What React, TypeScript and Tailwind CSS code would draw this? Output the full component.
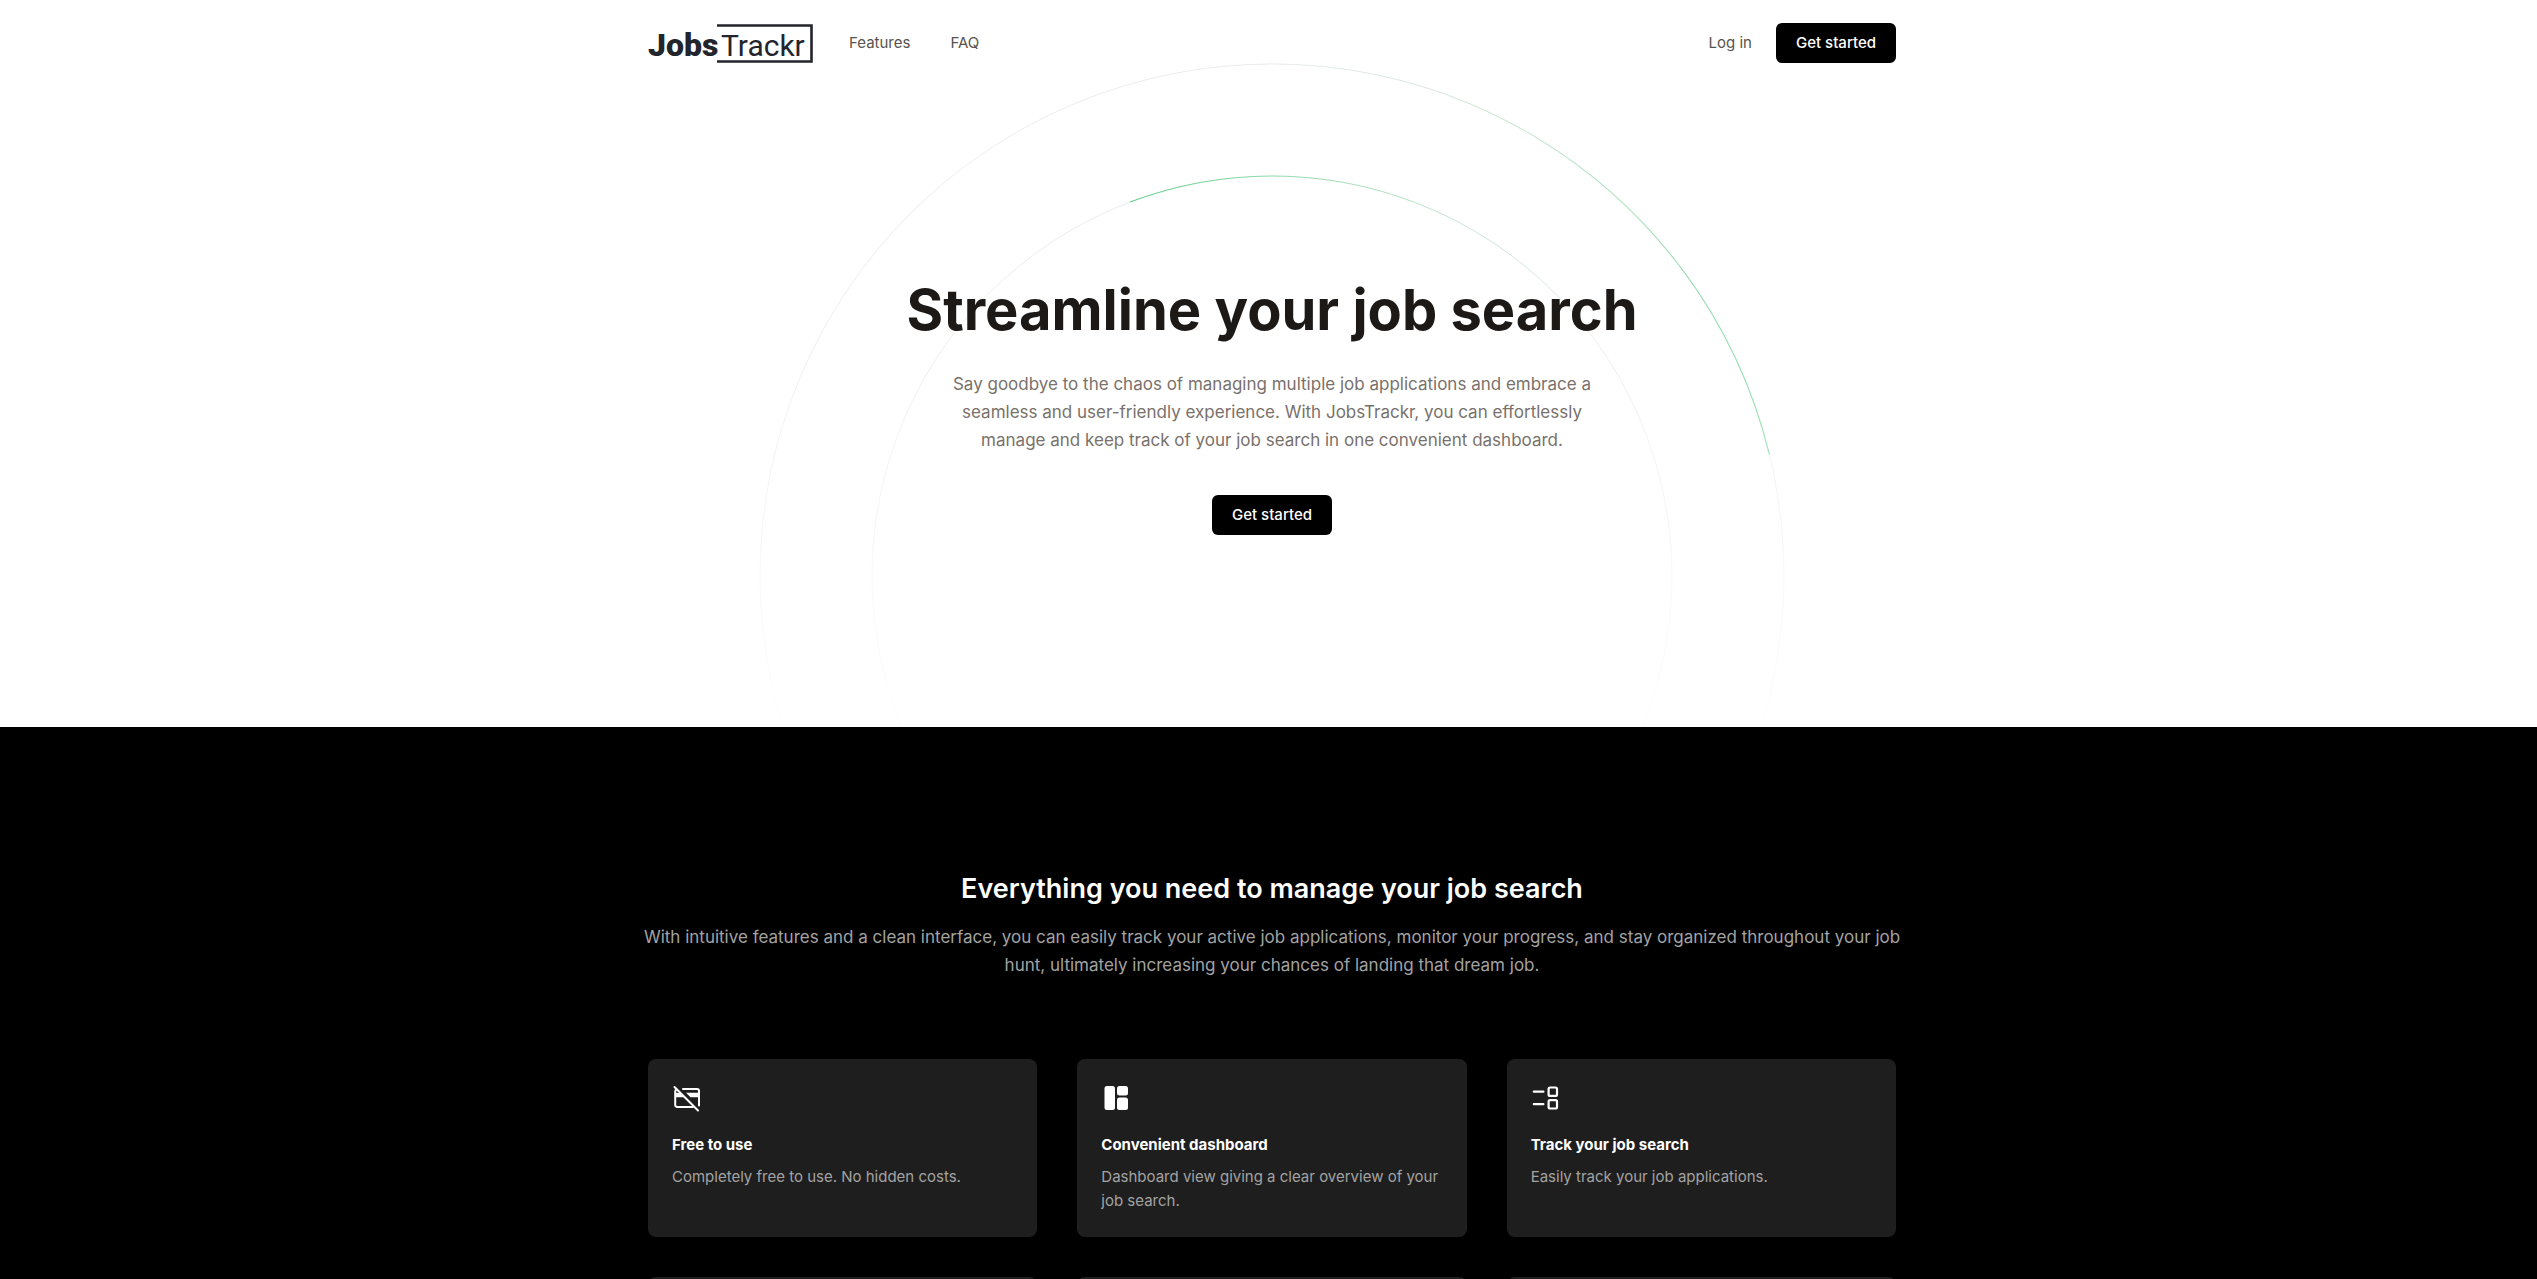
import type { ReactNode } from 'react';

function Logo() {
  return (
    <svg width="166" height="41" viewBox="0 0 166 41" role="img" aria-label="JobsTrackr" fill="#23252d">
      <text x="0" y="33" fontFamily="Roboto, sans-serif" fontWeight="900" fontSize="32">
        Jobs
      </text>
      <text x="73" y="33" fontFamily="Roboto, sans-serif" fontWeight="400" fontSize="30">
        Trackr
      </text>
      <path d="M69 2.500H163.500V38.500H69" fill="none" stroke="#23252d" strokeWidth="2.600" />
    </svg>
  );
}

function Rings() {
  return (
    <div
      aria-hidden="true"
      className="pointer-events-none absolute left-1/2 top-[63px] size-[1026px] -translate-x-1/2 [mask-image:linear-gradient(to_bottom,white_20%,transparent_70%)]"
    >
      <svg viewBox="0 0 1026 1026" fill="none" className="absolute inset-0 size-full">
        <defs>
          <linearGradient id="outer-glow" x1="1" y1="513" x2="1" y2="1025" gradientUnits="userSpaceOnUse">
            <stop stopColor="#22c55e" />
            <stop offset="1" stopColor="#22c55e" stopOpacity="0" />
          </linearGradient>
          <linearGradient id="inner-glow" x1="913" y1="513" x2="913" y2="913" gradientUnits="userSpaceOnUse">
            <stop stopColor="#22c55e" />
            <stop offset="1" stopColor="#22c55e" stopOpacity="0" />
          </linearGradient>
        </defs>
        <g strokeOpacity="0.7">
          <circle cx="513" cy="513" r="512" stroke="#d4d4d4" strokeOpacity="0.45" />
          <circle cx="513" cy="513" r="400" stroke="#d4d4d4" strokeOpacity="0.45" />
          <path d="M513 1025C230.23 1025 1 795.77 1 513" stroke="url(#outer-glow)" transform="rotate(166.3 513 513)" />
          <path d="M913 513c0 220.914-179.086 400-400 400" stroke="url(#inner-glow)" transform="rotate(-110.8 513 513)" />
        </g>
      </svg>
    </div>
  );
}

const CardOffIcon = (
  <svg width="30" height="30" viewBox="0 0 30 30" fill="none" stroke="white" strokeWidth="2" strokeLinecap="round" strokeLinejoin="round">
    <path d="M11 6h14a2 2 0 0 1 2 2v14.500M4.500 6.500a2 2 0 0 0-1.300 2V22a2 2 0 0 0 2 2H21" />
    <path d="M14 9.800h13v4.500h-8.500zM3.500 9.800h4.500l4.500 4.500h-9z" fill="white" stroke="none" />
    <path d="M2.500 4 26 27.500" />
  </svg>
);

const DashboardIcon = (
  <svg width="30" height="30" viewBox="0 0 30 30" fill="white">
    <rect x="3.500" y="3" width="10.500" height="24" rx="2.500" />
    <rect x="16" y="3" width="11" height="9.500" rx="2.500" />
    <rect x="16" y="14.500" width="11" height="12.500" rx="2.500" />
  </svg>
);

const TrackIcon = (
  <svg width="30" height="30" viewBox="0 0 30 30" fill="none" stroke="white" strokeWidth="2.200" strokeLinecap="round">
    <path d="M2.800 8.700h9.600M2.800 21.200h9.600" />
    <rect x="17.600" y="4.500" width="8.400" height="8.400" rx="1.500" />
    <rect x="17.600" y="17.100" width="8.400" height="8.400" rx="1.500" />
  </svg>
);

const features: { icon: ReactNode; title: string; text: string }[] = [
  { icon: CardOffIcon, title: 'Free to use', text: 'Completely free to use. No hidden costs.' },
  { icon: DashboardIcon, title: 'Convenient dashboard', text: 'Dashboard view giving a clear overview of your job search.' },
  { icon: TrackIcon, title: 'Track your job search', text: 'Easily track your job applications.' },
];

function GetStarted() {
  return (
    <button type="button" className="h-10 rounded-md bg-black px-5 text-[15px] font-medium text-white">
      Get started
    </button>
  );
}

export default function App() {
  return (
    <div className="h-screen overflow-x-hidden overflow-y-auto bg-white font-['Inter',sans-serif] text-[15px] [scrollbar-width:none]">
      <div className="relative pb-48 pl-[7px]">
        <div className="absolute inset-0 left-[7px] overflow-hidden">
          <Rings />
        </div>
        <header className="relative mx-auto flex h-[86px] max-w-[1248px] items-center justify-between">
          <div className="flex items-center">
            <a href="#home">
              <Logo />
            </a>
            <nav className="ml-[35px] flex gap-10 text-stone-600">
              <a href="#features">Features</a>
              <a href="#faq">FAQ</a>
            </nav>
          </div>
          <div className="flex items-center gap-6">
            <a href="#login" className="text-stone-600">
              Log in
            </a>
            <GetStarted />
          </div>
        </header>
        <main className="relative mx-auto flex max-w-3xl flex-col items-center pt-48 text-center">
          <h1 className="text-[56px] leading-[64px] font-bold text-stone-900">Streamline your job search</h1>
          <p className="mt-7 max-w-[672px] text-[17px] leading-7 text-stone-500">
            Say goodbye to the chaos of managing multiple job applications and embrace a seamless and user-friendly
            experience. With JobsTrackr, you can effortlessly manage and keep track of your job search in one convenient
            dashboard.
          </p>
          <div className="mt-[41px]">
            <GetStarted />
          </div>
        </main>
      </div>
      <section id="features" className="bg-black pt-36 pb-36 pl-[7px]">
        <div className="mx-auto max-w-[1248px]">
          <div className="-mx-2 text-center">
            <h2 className="text-[27px] leading-9 font-semibold text-white">Everything you need to manage your job search</h2>
            <p className="mt-4 text-[17px] leading-7 text-[#a3a3a3]">
              With intuitive features and a clean interface, you can easily track your active job applications, monitor
              your progress, and stay organized throughout your job hunt, ultimately increasing your chances of landing
              that dream job.
            </p>
          </div>
          <div className="mt-20 grid grid-cols-3 gap-10">
            {features.map((f) => (
              <article key={f.title} className="rounded-lg bg-[#1e1e1e] p-6">
                {f.icon}
                <h3 className="mt-5 leading-6 font-bold text-white">{f.title}</h3>
                <p className="mt-2 leading-6 text-[#a3a3a3]">{f.text}</p>
              </article>
            ))}
            {features.map((f) => (
              <div key={f.title} className="h-44 rounded-lg bg-[#1e1e1e]" />
            ))}
          </div>
        </div>
      </section>
    </div>
  );
}
